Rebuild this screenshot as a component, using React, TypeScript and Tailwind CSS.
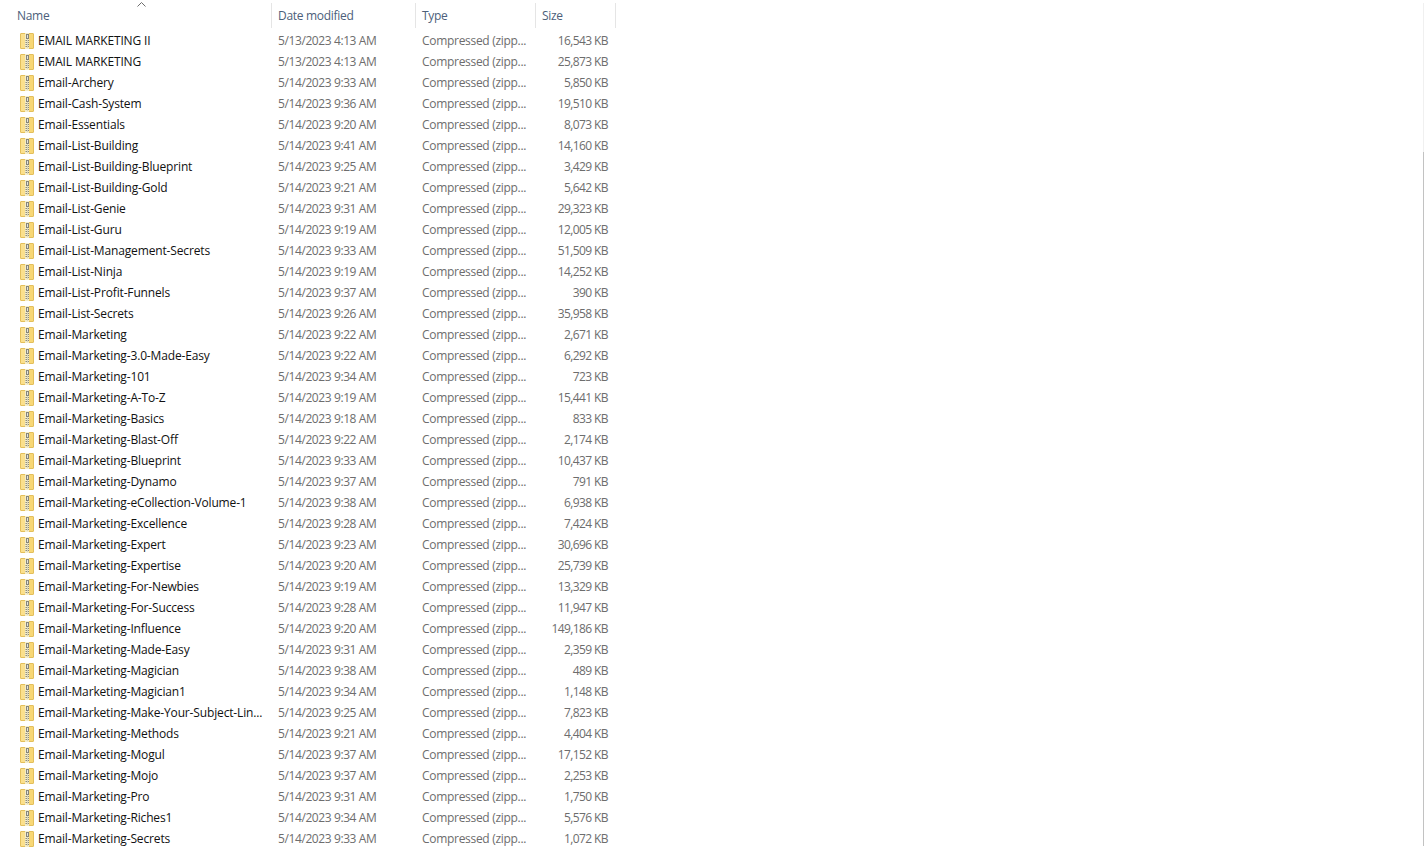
import React from 'react';

const files: [string, string, string][] = [
  ['EMAIL MARKETING II', '5/13/2023 4:13 AM', '16,543 KB'],
  ['EMAIL MARKETING', '5/13/2023 4:13 AM', '25,873 KB'],
  ['Email-Archery', '5/14/2023 9:33 AM', '5,850 KB'],
  ['Email-Cash-System', '5/14/2023 9:36 AM', '19,510 KB'],
  ['Email-Essentials', '5/14/2023 9:20 AM', '8,073 KB'],
  ['Email-List-Building', '5/14/2023 9:41 AM', '14,160 KB'],
  ['Email-List-Building-Blueprint', '5/14/2023 9:25 AM', '3,429 KB'],
  ['Email-List-Building-Gold', '5/14/2023 9:21 AM', '5,642 KB'],
  ['Email-List-Genie', '5/14/2023 9:31 AM', '29,323 KB'],
  ['Email-List-Guru', '5/14/2023 9:19 AM', '12,005 KB'],
  ['Email-List-Management-Secrets', '5/14/2023 9:33 AM', '51,509 KB'],
  ['Email-List-Ninja', '5/14/2023 9:19 AM', '14,252 KB'],
  ['Email-List-Profit-Funnels', '5/14/2023 9:37 AM', '390 KB'],
  ['Email-List-Secrets', '5/14/2023 9:26 AM', '35,958 KB'],
  ['Email-Marketing', '5/14/2023 9:22 AM', '2,671 KB'],
  ['Email-Marketing-3.0-Made-Easy', '5/14/2023 9:22 AM', '6,292 KB'],
  ['Email-Marketing-101', '5/14/2023 9:34 AM', '723 KB'],
  ['Email-Marketing-A-To-Z', '5/14/2023 9:19 AM', '15,441 KB'],
  ['Email-Marketing-Basics', '5/14/2023 9:18 AM', '833 KB'],
  ['Email-Marketing-Blast-Off', '5/14/2023 9:22 AM', '2,174 KB'],
  ['Email-Marketing-Blueprint', '5/14/2023 9:33 AM', '10,437 KB'],
  ['Email-Marketing-Dynamo', '5/14/2023 9:37 AM', '791 KB'],
  ['Email-Marketing-eCollection-Volume-1', '5/14/2023 9:38 AM', '6,938 KB'],
  ['Email-Marketing-Excellence', '5/14/2023 9:28 AM', '7,424 KB'],
  ['Email-Marketing-Expert', '5/14/2023 9:23 AM', '30,696 KB'],
  ['Email-Marketing-Expertise', '5/14/2023 9:20 AM', '25,739 KB'],
  ['Email-Marketing-For-Newbies', '5/14/2023 9:19 AM', '13,329 KB'],
  ['Email-Marketing-For-Success', '5/14/2023 9:28 AM', '11,947 KB'],
  ['Email-Marketing-Influence', '5/14/2023 9:20 AM', '149,186 KB'],
  ['Email-Marketing-Made-Easy', '5/14/2023 9:31 AM', '2,359 KB'],
  ['Email-Marketing-Magician', '5/14/2023 9:38 AM', '489 KB'],
  ['Email-Marketing-Magician1', '5/14/2023 9:34 AM', '1,148 KB'],
  ['Email-Marketing-Make-Your-Subject-Lin...', '5/14/2023 9:25 AM', '7,823 KB'],
  ['Email-Marketing-Methods', '5/14/2023 9:21 AM', '4,404 KB'],
  ['Email-Marketing-Mogul', '5/14/2023 9:37 AM', '17,152 KB'],
  ['Email-Marketing-Mojo', '5/14/2023 9:37 AM', '2,253 KB'],
  ['Email-Marketing-Pro', '5/14/2023 9:31 AM', '1,750 KB'],
  ['Email-Marketing-Riches1', '5/14/2023 9:34 AM', '5,576 KB'],
  ['Email-Marketing-Secrets', '5/14/2023 9:33 AM', '1,072 KB'],
];

const ZipIcon = () => (
  <svg width="14" height="16" viewBox="0 0 14 16" className="shrink-0">
    <rect x="0.5" y="0.5" width="13" height="15" rx="0.5" fill="#f8d775" stroke="#e3bf5c" />
    <rect x="1" y="1" width="4" height="14" fill="#fbe08d" />
    <rect x="5" y="0" width="4" height="16" fill="#f4ecc8" />
    <rect x="6" y="1" width="3" height="5" fill="#85857b" />
    <rect x="7" y="2" width="1" height="3" fill="#e4e4dc" />
    <path d="M5.5 7.5h3.5M5.5 9.5h3.5M5.5 11.5h3.5M5.5 13.5h3.5" stroke="#8f8d7e" strokeWidth="1" />
    <path d="M7.5 6v9" stroke="#d9d4b8" strokeWidth="1" />
  </svg>
);

const Header = ({ label, className }: { label: string; className: string }) => (
  <div className={`flex h-[25px] items-center border-r border-[#e5e5e5] tracking-[-0.3px] text-[#4c607a] ${className}`}>{label}</div>
);

export default function App() {
  return (
    <div className="flex h-[862px] w-full justify-between overflow-hidden bg-white font-['Open_Sans','Noto_Sans',sans-serif] text-[12px]">
      <div className="flex w-[616px] flex-col">
        <div className="relative flex pt-[3px]">
          <Header label="Name" className="w-[272px] pl-[17px]" />
          <Header label="Date modified" className="w-[144px] pl-[6px]" />
          <Header label="Type" className="w-[120px] pl-[6px]" />
          <Header label="Size" className="w-[80px] pl-[6px]" />
          <svg width="9" height="5" viewBox="0 0 9 5" className="absolute left-[137px] top-[2px]">
            <path d="M0.5 4.5l4-4 4 4" fill="none" stroke="#6d6d6d" strokeWidth="1" />
          </svg>
        </div>
        <div className="pt-[2px]">
          {files.map(([name, date, size]) => (
            <div key={name} className="flex h-[21px] items-center">
              <div className="flex w-[272px] items-center gap-[4px] pl-[20px] text-[#111]">
                <ZipIcon />
                <span className="whitespace-nowrap tracking-[-0.15px]">{name}</span>
              </div>
              <div className="w-[144px] pl-[6px] tracking-[-0.4px] text-[#6d6d6d]">{date}</div>
              <div className="w-[120px] pl-[6px] tracking-[-0.3px] text-[#6d6d6d]">Compressed (zipp...</div>
              <div className="w-[72px] text-right tracking-[-0.6px] text-[#6d6d6d]">{size}</div>
            </div>
          ))}
        </div>
      </div>
      <div className="mb-[16px] mt-[3px] flex w-px flex-col bg-[#f0f0f0]">
        <div className="mt-[149px] flex-1 bg-[#c2c2c2]" />
      </div>
    </div>
  );
}
